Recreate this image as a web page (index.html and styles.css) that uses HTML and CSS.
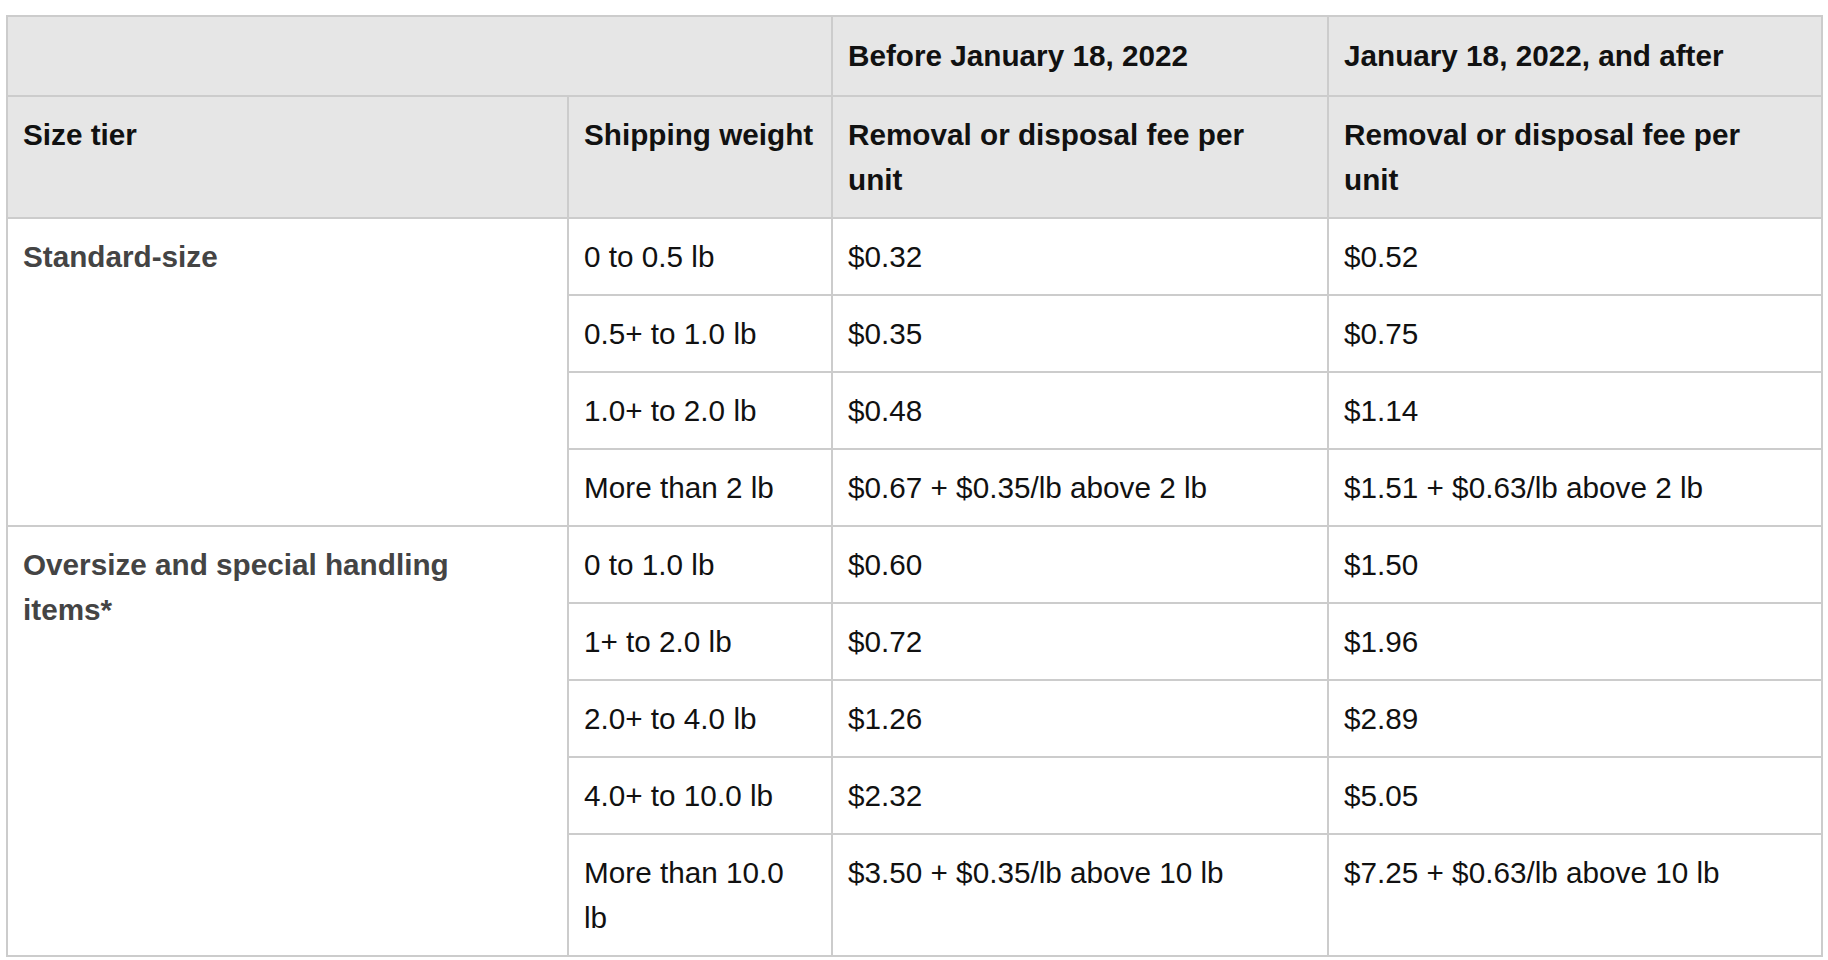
FILE: index.html
```html
<!DOCTYPE html>
<html lang="en">
<head>
<meta charset="utf-8">
<title>Removal and disposal fees</title>
<link rel="stylesheet" href="styles.css">
</head>
<body>
<table class="fees">
  <colgroup>
    <col class="c-tier">
    <col class="c-weight">
    <col class="c-before">
    <col class="c-after">
  </colgroup>
  <thead>
    <tr class="period-row">
      <th colspan="2"></th>
      <th>Before January 18, 2022</th>
      <th>January 18, 2022, and after</th>
    </tr>
    <tr>
      <th>Size tier</th>
      <th class="nowrap">Shipping weight</th>
      <th>Removal or disposal fee per unit</th>
      <th>Removal or disposal fee per unit</th>
    </tr>
  </thead>
  <tbody>
    <tr>
      <td class="tier" rowspan="4">Standard-size</td>
      <td class="weight">0 to 0.5 lb</td>
      <td>$0.32</td>
      <td>$0.52</td>
    </tr>
    <tr>
      <td class="weight">0.5+ to 1.0 lb</td>
      <td>$0.35</td>
      <td>$0.75</td>
    </tr>
    <tr>
      <td class="weight">1.0+ to 2.0 lb</td>
      <td>$0.48</td>
      <td>$1.14</td>
    </tr>
    <tr>
      <td class="weight">More than 2 lb</td>
      <td>$0.67 + $0.35/lb above 2 lb</td>
      <td>$1.51 + $0.63/lb above 2 lb</td>
    </tr>
    <tr>
      <td class="tier" rowspan="5">Oversize and special handling items*</td>
      <td class="weight">0 to 1.0 lb</td>
      <td>$0.60</td>
      <td>$1.50</td>
    </tr>
    <tr>
      <td class="weight">1+ to 2.0 lb</td>
      <td>$0.72</td>
      <td>$1.96</td>
    </tr>
    <tr>
      <td class="weight">2.0+ to 4.0 lb</td>
      <td>$1.26</td>
      <td>$2.89</td>
    </tr>
    <tr>
      <td class="weight">4.0+ to 10.0 lb</td>
      <td>$2.32</td>
      <td>$5.05</td>
    </tr>
    <tr>
      <td class="weight">More than 10.0 lb</td>
      <td>$3.50 + $0.35/lb above 10 lb</td>
      <td>$7.25 + $0.63/lb above 10 lb</td>
    </tr>
  </tbody>
</table>
</body>
</html>
```

FILE: styles.css
```css
html, body {
  margin: 0;
  padding: 0;
  background: #ffffff;
}

body {
  font-family: "Liberation Sans", Arial, Helvetica, sans-serif;
  font-size: 29.7px;
  line-height: 45px;
  color: #111111;
}

.fees {
  table-layout: fixed;
  border-collapse: collapse;
  width: 1815px;
  margin: 15px 0 0 6px;
}

.c-tier { width: 561px; }
.c-weight { width: 264px; }
.c-before { width: 496px; }
.c-after { width: 494px; }

.fees th,
.fees td {
  border: 2px solid #cccccc;
  padding: 15px 15px 15px 15px;
  text-align: left;
  vertical-align: top;
}

.fees th {
  background: #e6e6e6;
  font-weight: bold;
  color: #111111;
  padding-right: 34px;
}

.period-row th {
  padding-top: 16px;
  padding-bottom: 17px;
}

.nowrap {
  white-space: nowrap;
}

.fees td.weight {
  padding-right: 22px;
}

.fees td.tier {
  font-weight: bold;
  color: #444444;
  padding-right: 44px;
}
```
